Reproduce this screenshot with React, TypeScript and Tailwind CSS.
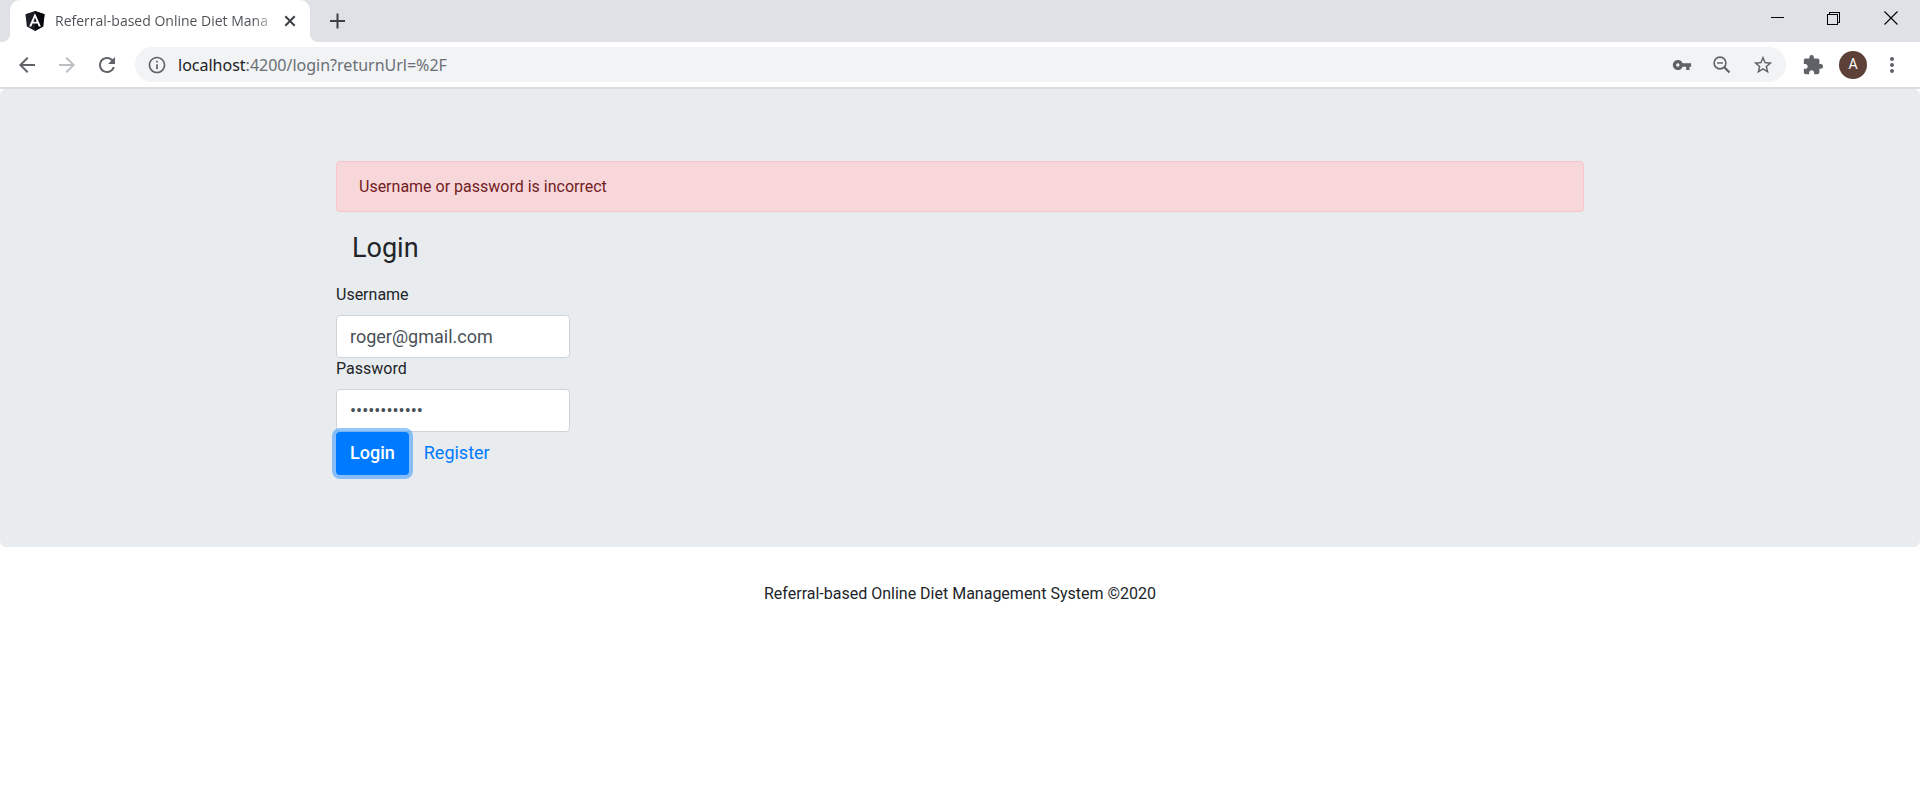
import { useState } from 'react';
import {
  MdArrowBack,
  MdArrowForward,
  MdExtension,
  MdInfoOutline,
  MdMoreVert,
  MdRefresh,
  MdStarBorder,
  MdVpnKey,
} from 'react-icons/md';

function AngularLogo() {
  return (
    <svg viewBox="0 0 20 20" className="h-5 w-5 shrink-0" aria-hidden="true">
      <path d="M10 0 19.6 3.3 18.1 15.6 10 20 1.9 15.6 .4 3.3Z" fill="#1c1f26" />
      <path d="M10 0 19.6 3.3 18.1 15.6 10 20Z" fill="#06080e" />
      <path d="M10 2.2 4.1 15.4H6.3L7.5 12.5H12.5L13.7 15.4H15.9ZM10 6.5 11.7 10.7H8.3Z" fill="#fff" fillRule="evenodd" />
    </svg>
  );
}

function ZoomOutIcon() {
  return (
    <svg viewBox="0 0 20 20" className="h-5 w-5" fill="none" stroke="currentColor" aria-hidden="true">
      <circle cx="8" cy="8" r="5.9" strokeWidth="1.6" />
      <path d="M5 8h6" strokeWidth="1.4" />
      <path d="m12.3 12.3 5.2 5.2" strokeWidth="2.2" />
    </svg>
  );
}

function TabStrip() {
  return (
    <div className="flex h-[42px] items-stretch bg-[#dee1e6]">
      <div className="flex w-2.5 bg-white">
        <div className="w-full rounded-br-lg bg-[#dee1e6]" />
      </div>
      <div className="flex w-[300px] items-center rounded-t-[10px] bg-white pr-2.5 pl-[15px]">
        <AngularLogo />
        <span className="ml-2.5 flex-1 bg-linear-to-r from-[#4a4e52] from-88% to-transparent to-100% bg-clip-text font-['Open_Sans',sans-serif] text-[14px] leading-5 whitespace-nowrap text-transparent">
          Referral-based Online Diet Mana
        </span>
        <button type="button" aria-label="Close tab" className="flex h-5 w-5 items-center justify-center text-[#3c4043]">
          <svg viewBox="0 0 20 20" className="h-5 w-5" fill="none" stroke="currentColor" strokeWidth="2">
            <path d="m5.3 5.3 9.4 9.4m0-9.4-9.4 9.4" />
          </svg>
        </button>
      </div>
      <div className="flex w-2.5 bg-white">
        <div className="w-full rounded-bl-lg bg-[#dee1e6]" />
      </div>
      <button type="button" aria-label="New tab" className="ml-2 flex w-5 items-center justify-center text-[#3c4043]">
        <svg viewBox="0 0 20 20" className="h-5 w-5" fill="none" stroke="currentColor" strokeWidth="2">
          <path d="M9.5 2.5v15M2 10h15" />
        </svg>
      </button>
      <div className="ml-auto flex h-9 text-black">
        <button type="button" aria-label="Minimize" className="flex w-14 items-center justify-center">
          <svg viewBox="0 0 14 14" className="h-3.5 w-3.5" shapeRendering="crispEdges">
            <path d="M0 6h13v1H0z" />
          </svg>
        </button>
        <button type="button" aria-label="Restore" className="flex w-14 items-center justify-center">
          <svg viewBox="0 0 14 14" className="h-3.5 w-3.5" fill="none" stroke="currentColor" shapeRendering="crispEdges">
            <path d="M.5 3.5h10v10H.5zM2.5 3.5v-2h10v10h-2" />
          </svg>
        </button>
        <button type="button" aria-label="Close" className="flex w-[58px] items-center justify-center">
          <svg viewBox="0 0 14 14" className="h-3.5 w-3.5" fill="none" stroke="currentColor" strokeWidth="1.1">
            <path d="m.5 .5 13 13m0-13-13 13" />
          </svg>
        </button>
      </div>
    </div>
  );
}

function Toolbar() {
  return (
    <div className="flex h-[47px] items-center border-b-2 border-[#dadce0] bg-white pr-4 pl-[15px] text-[#5f6368]">
      <button type="button" aria-label="Back" className="mr-4">
        <MdArrowBack size={24} />
      </button>
      <button type="button" aria-label="Forward" className="mr-4 text-[#bdc0c3]">
        <MdArrowForward size={24} />
      </button>
      <button type="button" aria-label="Reload" className="mr-4">
        <MdRefresh size={24} />
      </button>
      <div className="flex h-[35px] flex-1 items-center rounded-full bg-[#f1f3f4] pr-3 pl-3">
        <MdInfoOutline size={20} />
        <a href="#login" className="ml-[11px] font-['Noto_Sans',sans-serif] text-[16px] leading-6 text-[#6b6f74]">
          <span className="text-[#202124]">localhost</span>:4200/login?returnUrl=%2F
        </a>
        <div className="ml-auto flex items-center gap-5">
          <button type="button" aria-label="Saved passwords">
            <MdVpnKey size={20} />
          </button>
          <button type="button" aria-label="Zoom out">
            <ZoomOutIcon />
          </button>
          <button type="button" aria-label="Bookmark this page">
            <MdStarBorder size={22} />
          </button>
        </div>
      </div>
      <button type="button" aria-label="Extensions" className="ml-4">
        <MdExtension size={22} />
      </button>
      <button
        type="button"
        aria-label="Profile"
        className="mr-px ml-[15px] flex h-7 w-7 items-center justify-center rounded-full bg-[#5d4037] font-['Roboto',sans-serif] text-[14px] text-white"
      >
        A
      </button>
      <button type="button" aria-label="Menu" className="ml-3">
        <MdMoreVert size={24} />
      </button>
    </div>
  );
}

const inputClass =
  'block h-[43px] w-[234px] rounded-[4px] border border-[#ced4da] bg-white px-[13px] text-[18px] text-[#495057] outline-none';

function LoginForm() {
  const [username, setUsername] = useState('roger@gmail.com');
  const [password, setPassword] = useState('password1234');

  return (
    <form onSubmit={(e) => e.preventDefault()}>
      <h1 className="mb-5 px-4 text-[27px] leading-8">Login</h1>
      <label htmlFor="username" className="mb-[9px] block leading-[22px]">
        Username
      </label>
      <input id="username" type="text" value={username} onChange={(e) => setUsername(e.target.value)} className={inputClass} />
      <label htmlFor="password" className="mb-[9px] block leading-[22px]">
        Password
      </label>
      <input id="password" type="password" value={password} onChange={(e) => setPassword(e.target.value)} className={inputClass} />
      <div className="flex items-center">
        <button type="submit" className="relative h-[43px] rounded-[4px] bg-[#007bff] px-3.5 pb-0.5 text-[18px] font-medium text-white ring-4 ring-[#268fff]/50">
          Login
        </button>
        <a href="#register" className="px-[15px] pb-0.5 text-[18px] text-[#007bff]">
          Register
        </a>
      </div>
    </form>
  );
}

export default function App() {
  return (
    <div className="min-h-screen bg-white">
      <header>
        <TabStrip />
        <Toolbar />
      </header>
      <div className="font-['Roboto',sans-serif] text-[16px] text-[#212529]">
        <main className="rounded-md bg-[#e9ecef] px-8 py-[72px]">
          <div className="mx-auto max-w-[1248px]">
            <div role="alert" className="mb-5 rounded-[4px] border border-[#f5c6cb] bg-[#f8d7da] px-[22px] py-3 leading-[25px] text-[#721c24]">
              Username or password is incorrect
            </div>
            <LoginForm />
          </div>
        </main>
        <footer className="py-8 text-center leading-[30px]">Referral-based Online Diet Management System ©2020</footer>
      </div>
    </div>
  );
}
